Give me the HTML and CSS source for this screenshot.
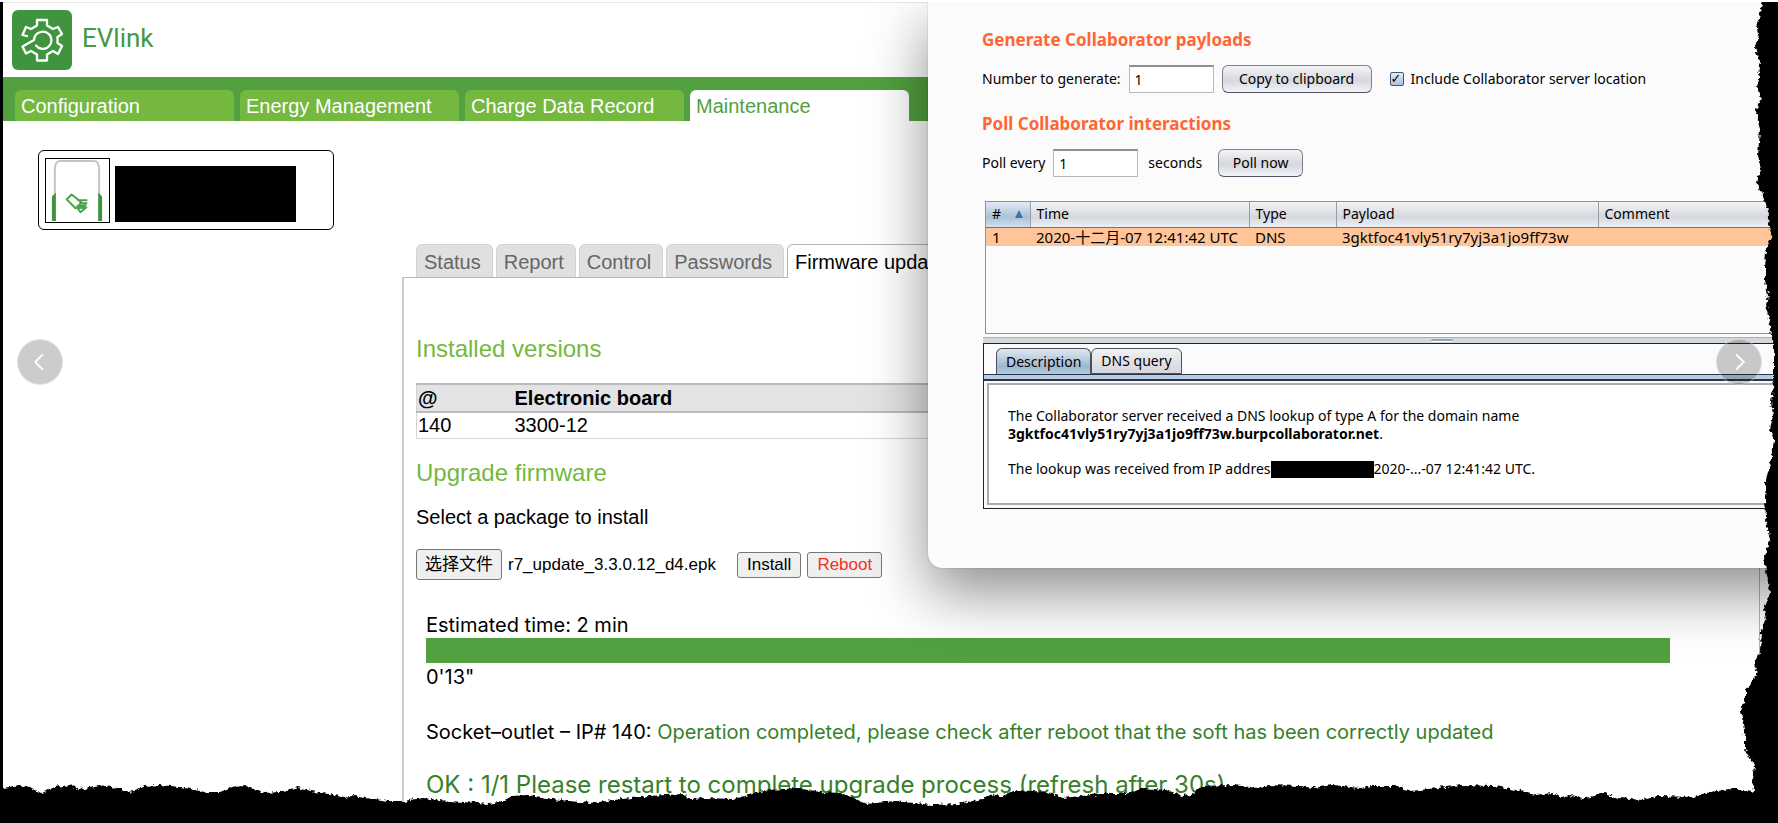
FILE: index.html
```html
<!DOCTYPE html>
<html lang="en">
<head>
<meta charset="utf-8">
<title>EVlink</title>
<link rel="stylesheet" href="styles.css">
</head>
<body>
<div class="stage">
  <div class="app">
    <header class="brand">
      <svg class="brand-logo" viewBox="0 0 60 60" aria-hidden="true">
        <rect width="60" height="60" rx="6" fill="#3f953f"/>
        <g fill="none" stroke="#fff" stroke-width="2.300" stroke-linejoin="round" stroke-linecap="round">
          <path d="M15 26 L10.500 25 L14 17 L19 19 L25 15.500 V10 H35 V15.500 L41 19 L46 17 L50 24 L45.500 27 V33 L50 36 L46 44 L41 41 L35 44.500 V50.500 H25 V44.500 L19 41 L14 43.500 L10.500 36.500 L22 30 Q22.500 23.500 28.500 22 A8.600 8.600 0 1 1 24 35.500"/>
        </g>
      </svg>
      <span class="brand-name">EVlink</span>
    </header>
    <nav class="main-nav">
      <a class="main-tab" href="#">Configuration</a>
      <a class="main-tab" href="#">Energy Management</a>
      <a class="main-tab" href="#">Charge Data Record</a>
      <a class="main-tab main-tab-active" href="#">Maintenance</a>
    </nav>
    <div class="columns">
      <aside class="side">
        <div class="device">
          <svg class="device-icon" viewBox="0 0 64 64" aria-hidden="true">
            <path d="M9 63 V12 Q9 2 14 2 H49 Q54 2 54 12 V63" fill="none" stroke="#c4c4c4" stroke-width="2"/>
            <path d="M6 63 V38 L10 34 V63 Z M57 63 V38 L53 34 V63 Z" fill="#3f953f"/>
            <g fill="none" stroke="#4aa24a" stroke-width="2" stroke-linejoin="round">
              <path d="M21 41 L26 36 L36 44 L32 49 L30 50 Z"/>
              <path d="M32 42 H42 M34 45 H42 M31 48 L41 47 M32 50 L41 49 L35 54 Z"/>
            </g>
          </svg>
          <span class="device-mask"></span>
        </div>
      </aside>
      <main class="content">
        <nav class="sub-nav">
          <a class="sub-tab" href="#">Status</a>
          <a class="sub-tab" href="#">Report</a>
          <a class="sub-tab" href="#">Control</a>
          <a class="sub-tab" href="#">Passwords</a>
          <a class="sub-tab sub-tab-active" href="#">Firmware update</a>
        </nav>
        <section class="panel">
          <h2 class="title">Installed versions</h2>
          <table class="versions">
            <thead><tr><th class="versions-id">@</th><th>Electronic board</th></tr></thead>
            <tbody><tr><td>140</td><td>3300-12</td></tr></tbody>
          </table>
          <h2 class="title">Upgrade firmware</h2>
          <p class="hint">Select a package to install</p>
          <div class="upload">
            <button class="btn btn-file" type="button">选择文件</button>
            <span class="file-name">r7_update_3.3.0.12_d4.epk</span>
            <button class="btn" type="button">Install</button>
            <button class="btn btn-danger" type="button">Reboot</button>
          </div>
          <div class="progress">
            <p>Estimated time: 2 min</p>
            <div class="progress-bar"></div>
            <p>0'13"</p>
            <p class="result">Socket–outlet – IP# 140: <span class="ok">Operation completed, please check after reboot that the soft has been correctly updated</span></p>
            <p class="summary">OK : 1/1 Please restart to complete upgrade process (refresh after 30s)</p>
          </div>
        </section>
      </main>
    </div>
  </div>

  <section class="window">
    <h3 class="win-title">Generate Collaborator payloads</h3>
    <div class="win-row">
      <label for="count">Number to generate:</label>
      <input class="field" id="count" type="text" value="1">
      <button class="win-btn win-btn-copy" type="button">Copy to clipboard</button>
      <label class="check"><input class="check-box" type="checkbox" checked>Include Collaborator server location</label>
    </div>
    <h3 class="win-title">Poll Collaborator interactions</h3>
    <div class="win-row">
      <label for="poll">Poll every</label>
      <input class="field" id="poll" type="text" value="1">
      <span class="unit">seconds</span>
      <button class="win-btn win-btn-poll" type="button">Poll now</button>
    </div>
    <div class="log">
      <table class="log-table">
        <colgroup><col class="c-num"><col class="c-time"><col class="c-type"><col class="c-payload"><col></colgroup>
        <thead><tr><th class="sorted"><span class="sort">#<svg class="sort-mark" viewBox="0 0 10 10" aria-hidden="true"><path d="M5 1 L9 9 H1 Z" fill="#3a72a8"/></svg></span></th><th>Time</th><th>Type</th><th>Payload</th><th>Comment</th></tr></thead>
        <tbody><tr><td>1</td><td>2020-十二月-07 12:41:42 UTC</td><td>DNS</td><td>3gktfoc41vly51ry7yj3a1jo9ff73w</td><td></td></tr></tbody>
      </table>
    </div>
    <div class="splitter"><span class="grip"></span></div>
    <div class="detail">
      <div class="detail-tabs">
        <button class="detail-tab detail-tab-active" type="button">Description</button>
        <button class="detail-tab" type="button">DNS query</button>
      </div>
      <div class="band"></div>
      <div class="message">
        <p>The Collaborator server received a DNS lookup of type A for the domain name<br><b>3gktfoc41vly51ry7yj3a1jo9ff73w.burpcollaborator.net</b>.</p>
        <p class="lookup"><span>The lookup was received from IP addres</span><span class="ip-mask"></span><span>2020-...-07 12:41:42 UTC.</span></p>
      </div>
    </div>
  </section>

  <svg class="edge" viewBox="0 0 1778 823" preserveAspectRatio="none" aria-hidden="true">
    <filter id="rough" x="0" y="0" width="1" height="1">
      <feTurbulence type="fractalNoise" baseFrequency="0.25" numOctaves="2" seed="4"/>
      <feDisplacementMap in="SourceGraphic" scale="6" xChannelSelector="R" yChannelSelector="G"/>
    </filter>
    <path filter="url(#rough)" d="M-20 850 V788 L3 788 20 785 30 787 41 793 55 787 70 785 80 789 100 785 117 788 130 792 145 786 160 785 180 787 190 789 205 792 220 792 235 786 245 785 265 793 280 792 298 787 315 792 330 794 345 798 355 795 375 799 388 801 403 801 423 798 438 800 490 804 505 800 512 796 528 795 553 799 568 801 591 803 614 800 649 796 683 794 691 799 706 798 733 799 756 793 771 790 796 788 821 792 840 793 855 798 867 804 894 801 932 805 958 804 983 799 993 794 1000 797 1017 790 1047 792 1063 798 1100 794 1127 794 1140 788 1167 790 1183 796 1190 795 1202 786 1233 785 1258 788 1267 785 1300 786 1313 788 1333 785 1360 788 1373 786 1395 786 1411 791 1438 788 1461 785 1495 786 1525 792 1535 795 1553 793 1560 797 1570 795 1583 799 1605 793 1618 798 1643 800 1658 796 1693 797 1711 792 1735 788 1754 793 1753 778 1755 766 1745 750 1745 737 1741 711 1746 697 1746 690 1757 674 1754 663 1760 652 1761 630 1766 618 1764 609 1770 592 1766 570 1764 559 1770 540 1766 520 1765 497 1766 480 1772 455 1774 440 1770 430 1773 415 1771 402 1774 380 1774 345 1770 325 1766 305 1768 295 1765 282 1765 270 1766 250 1772 235 1768 225 1769 215 1765 200 1756 182 1761 170 1758 155 1760 130 1756 110 1761 98 1758 90 1760 65 1755 48 1758 35 1757 28 1761 8 1765 -10 H1800 V850 Z"/>
    <path d="M0 2 H3 V823 H0 Z M0 812 H1778 V823 H0 Z M1775 2 H1778 V823 H1775 Z"/>
    <path d="M0 0 H1778 V2 H0 Z" fill="#fff"/>
  </svg>
  <button class="arrow arrow-prev" type="button" aria-label="Previous"><svg viewBox="0 0 46 46"><path d="M26 15 L18 23 L26 31"/></svg></button>
  <button class="arrow arrow-next" type="button" aria-label="Next"><svg viewBox="0 0 46 46"><path d="M20 15 L28 23 L20 31"/></svg></button>
</div>
</body>
</html>
```
FILE: styles.css
```css
* { box-sizing: border-box; }

body {
  margin: 0;
  background: #fff;
  color: #000;
  font-family: "Liberation Sans", "Noto Sans CJK SC", sans-serif;
  font-size: 20px;
  line-height: 24px;
}

h2, h3, p { margin: 0; font-weight: normal; }

a { text-decoration: none; }

button, input { font: inherit; color: inherit; margin: 0; }

.stage {
  position: relative;
  height: 100vh;
  overflow: hidden;
}

.app { padding: 2px 0 0 3px; }

.brand {
  display: flex;
  gap: 10px;
  height: 75px;
  padding: 7px 9px;
  border-top: 1px solid #e8e8e8;
}

.brand-logo { width: 60px; height: 60px; }

.brand-name {
  padding-top: 16px;
  color: #429a46;
  font-family: Roboto, sans-serif;
  font-size: 26px;
}

.main-nav {
  display: flex;
  gap: 6px;
  padding: 13px 12px 0;
  background: #52a03f;
}

.main-tab {
  width: 219px;
  padding: 4px 6px 3px;
  border-radius: 6px 6px 0 0;
  background: #74b83f;
  color: #fff;
}

.main-tab-active { background: #fff; color: #52a03f; }

.columns { display: flex; }

.side { width: 399px; padding: 29px 35px; }

.device {
  display: flex;
  align-items: center;
  gap: 5px;
  width: 296px;
  padding: 6px;
  height: 80px;
  border: 1px solid #000;
  border-radius: 6px;
}

.device-icon { width: 65px; height: 65px; border: 1px solid #000; }

.device-mask { width: 181px; height: 56px; margin-top: 8px; background: #000; }

.content { flex: 1; padding: 123px 18px 0 0; }

.sub-nav { display: flex; gap: 3px; padding-left: 14px; }

.sub-tab {
  height: 33px;
  padding: 5px 11px 4px 7px;
  border: 1px solid #d4d4d4;
  border-bottom: 0;
  border-radius: 6px 6px 0 0;
  background: #e0e0e0;
  color: #666;
}

.sub-tab-active {
  position: relative;
  height: 34px;
  margin-bottom: -1px;
  border-color: #b4b4b4;
  background: #fff;
  color: #000;
}

.panel {
  min-height: 560px;
  padding: 49px 12px 0;
  border: 1px solid #b4b4b4;
  border-left: 2px solid #ccc;
}

.title { color: #74b83f; font-size: 24px; line-height: 44px; }

.versions {
  width: 100%;
  margin: 12px 0;
  border: 1px solid #d4d4d4;
  border-collapse: collapse;
  text-align: left;
}

.versions th {
  padding: 1px;
  border-top: 2px solid #bbb;
  border-bottom: 2px solid #bbb;
  background: #e3e3e5;
}

.versions td { padding: 0 1px 1px; }

.versions-id { width: 97px; }

.hint { padding: 10px 0 20px; }

.upload {
  display: flex;
  align-items: center;
  gap: 6px;
  font-size: 17px;
}

.btn {
  height: 26px;
  padding: 0 9px;
  border: 1px solid #767676;
  border-radius: 3px;
  background: #efefef;
  line-height: 20px;
}

.btn-file { height: 31px; padding: 0 8px; }

.btn-danger { color: #f3301f; }

.file-name { margin-right: 15px; }

.progress {
  padding: 33px 77px 0 10px;
  font-family: Inter, sans-serif;
}

.progress-bar { height: 25px; margin: 1px 0 2px; background: #52a03f; }

.result { padding-top: 31px; }

.ok, .summary { color: #36802a; }

.summary { padding-top: 27px; font-size: 24px; line-height: 28px; }

.window {
  position: absolute;
  top: 2px;
  left: 928px;
  right: -122px;
  padding: 24px 0 59px 54px;
  border-radius: 0 0 0 14px;
  background: #fbfbfb;
  box-shadow: 0 0 1px rgba(0, 0, 0, .5), 0 24px 60px rgba(0, 0, 0, .45);
  font-family: "Noto Sans", "Noto Sans CJK SC", sans-serif;
  font-size: 14px;
  line-height: 18px;
}

.win-title {
  color: #ff6633;
  font-size: 17px;
  font-weight: bold;
  line-height: 28px;
}

.win-row {
  display: flex;
  align-items: center;
  gap: 8px;
  padding: 11px 0 17px;
}

.field {
  width: 85px;
  height: 28px;
  padding: 0 5px;
  border: 1px solid #b8b8b8;
  border-top: 2px solid #8f8f8f;
  background: #fff;
}

.win-btn {
  height: 28px;
  border: 1px solid #7d828c;
  border-bottom-color: #4e5460;
  border-radius: 6px;
  background: linear-gradient(#f4f5f8, #d6d8de 55%, #f2f3f8);
}

.win-btn-copy { width: 150px; }

.win-btn-poll { width: 85px; margin-left: 8px; }

.unit { margin-left: 2px; }

.check { display: flex; align-items: center; gap: 7px; margin-left: 10px; }

.check-box {
  appearance: none;
  width: 14px;
  height: 14px;
  border: 1px solid #39587a;
  border-radius: 2px;
  background: linear-gradient(#e4edf5, #a9c1d8);
}

.check-box:checked::before {
  content: "✓";
  display: block;
  font: bold 13px/12px "DejaVu Sans", sans-serif;
}

.log {
  height: 133px;
  margin: 7px 0 3px 3px;
  border: 1px solid #8d929c;
}

.log-table {
  width: 100%;
  table-layout: fixed;
  border-collapse: collapse;
  text-align: left;
}

.log-table th {
  height: 25px;
  padding: 0 6px;
  border-right: 1px solid #9a9ea8;
  border-bottom: 1px solid #6d727c;
  background: linear-gradient(#f3f4f7, #d5d7dd 60%, #eceff6);
  font-weight: normal;
}

.log-table .sorted { background: linear-gradient(#e2ebf4, #aac2d8 60%, #cfe0f0); }

.log-table td { height: 19px; padding: 0 6px; background: #ffc599; font-size: 15px; white-space: nowrap; }

.sort { display: flex; align-items: center; justify-content: space-between; }

.sort-mark { width: 10px; height: 10px; }

.c-num { width: 44px; }
.c-time { width: 219px; }
.c-type { width: 87px; }
.c-payload { width: 262px; }

.splitter {
  display: flex;
  justify-content: center;
  height: 6px;
  margin-left: 1px;
  padding: 1px 0;
  border-top: 1px solid #aab0b6;
  background: #d3d8dc;
}

.grip { width: 22px; border-top: 2px solid #9aa6b2; border-bottom: 1px solid #fff; border-radius: 2px; }

.detail {
  margin-left: 1px;
  padding-bottom: 3px;
  border: 1px solid #222;
}

.detail-tabs { display: flex; padding: 4px 12px 0; }

.detail-tab {
  height: 26px;
  padding: 0 9px;
  border: 1px solid #4a4f5c;
  border-radius: 6px 6px 0 0;
  background: linear-gradient(#f0f1f4, #d4d6dc);
}

.detail-tab-active { border-bottom: 0; background: linear-gradient(#dfe9f2, #9fb8d0 70%, #b4cbe0); }

.band { height: 7px; border-top: 1px solid #2b3448; border-bottom: 2px solid #2b3448; background: #b8cde2; }

.message {
  margin: 2px 0 0 3px;
  padding: 22px 19px 25px;
  border: 2px solid #a9acb3;
  background: #fff;
}

.lookup { display: flex; align-items: center; padding-top: 17px; }

.ip-mask { width: 103px; height: 17px; background: #000; }

.edge {
  position: absolute;
  inset: 0;
  width: 100%;
  height: 100%;
  pointer-events: none;
}

.arrow {
  position: absolute;
  top: 339px;
  width: 46px;
  height: 46px;
  padding: 0;
  border: 1px solid rgba(255, 255, 255, .4);
  border-radius: 50%;
  background: rgba(0, 0, 0, .2);
}

.arrow svg { display: block; width: 100%; fill: none; stroke: #fff; stroke-width: 2; }

.arrow-prev { left: 17px; }
.arrow-next { right: 16px; }
```
